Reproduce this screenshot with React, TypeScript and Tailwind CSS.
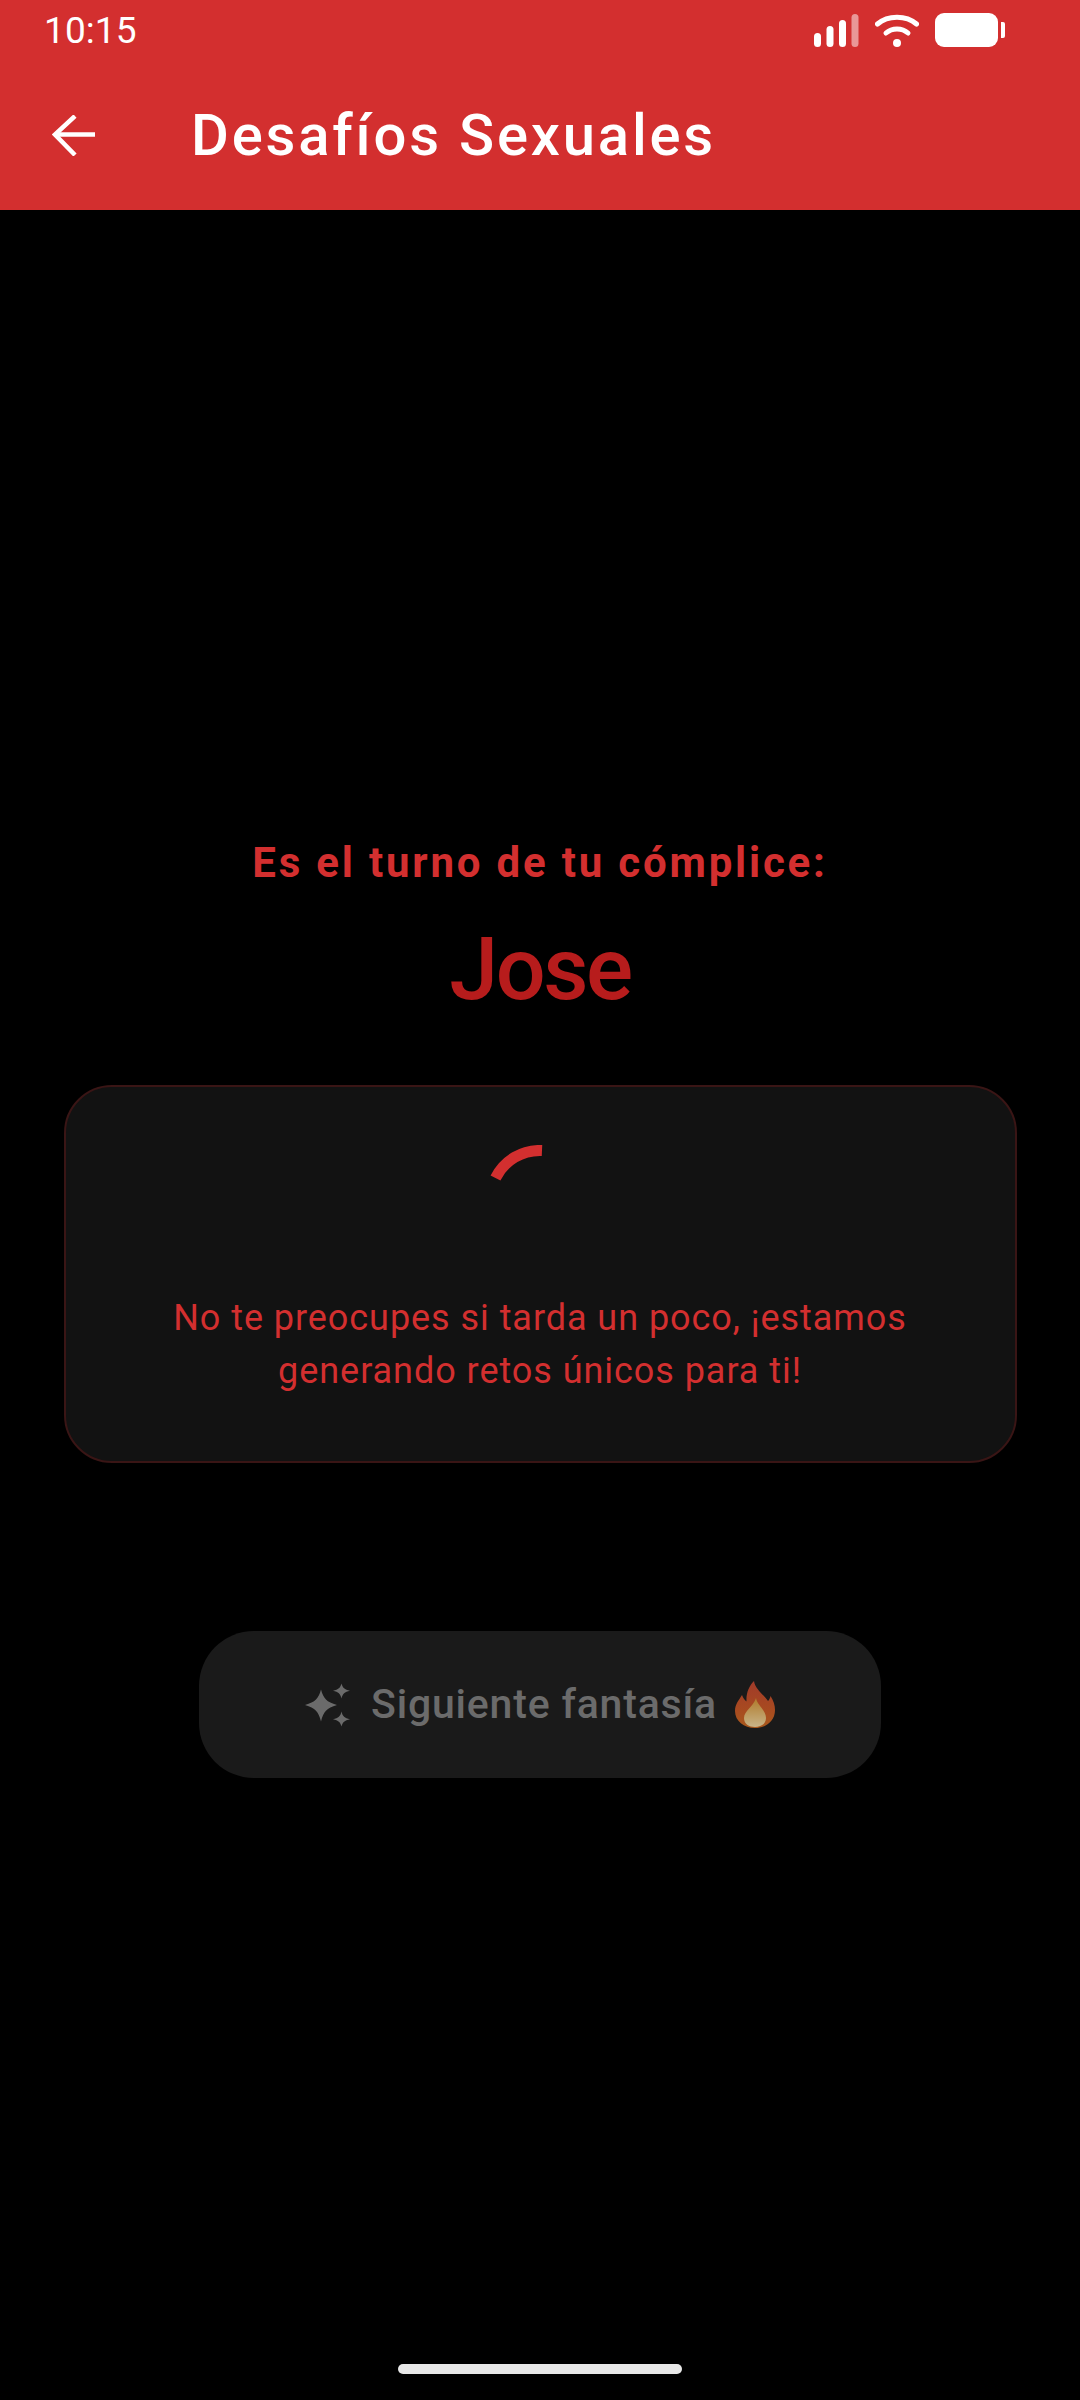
const RED = "#d32f2f";

function SignalIcon() {
  return (
    <svg width="45" height="33" viewBox="0 0 45 33" fill="#fff">
      <rect x="0" y="19" width="7" height="14" rx="3.5" />
      <rect x="12.5" y="12" width="7" height="21" rx="3.5" />
      <rect x="25" y="6" width="7" height="27" rx="3.5" />
      <rect x="37.5" y="0" width="7" height="33" rx="3.5" opacity="0.5" />
    </svg>
  );
}

function WifiIcon() {
  return (
    <svg width="44" height="33" viewBox="0 0 44 33" fill="none" stroke="#fff" strokeWidth="5" strokeLinecap="round">
      <path d="M2.5 10 C13 1 31 1 41.5 10" />
      <path d="M11 19 C17 13.5 27 13.5 33 19" />
      <circle cx="22" cy="29" r="4" fill="#fff" stroke="none" />
    </svg>
  );
}

function BatteryIcon() {
  return (
    <div className="flex items-center gap-[3px]">
      <div className="h-[34px] w-[63px] rounded-[9px] bg-white" />
      <div className="h-[16px] w-[4px] rounded-r-[2px] bg-white" />
    </div>
  );
}

function Spinner() {
  return (
    <svg width="110" height="110" viewBox="0 0 110 110" fill="none" stroke={RED} strokeWidth="11">
      <path d="M57 5.5 A49.5 49.5 0 0 0 10.5 33" />
    </svg>
  );
}

function Sparkles() {
  return (
    <svg width="45" height="44" viewBox="0 0 45 43" fill="#6b6b6b">
      <path d="M16 6 C18.500 15 21.500 18.500 32 21.500 C21.500 24.500 18.500 28 16 38 C13.500 28 10.500 24.500 0 21.500 C10.500 18.500 13.500 15 16 6 Z" />
      <path d="M36.500 0 C37.700 4.500 39.500 6 45 7.200 C39.500 8.500 37.700 10 36.500 15 C35.300 10 33.500 8.500 28 7.200 C33.500 6 35.300 4.500 36.500 0 Z" />
      <path d="M36.500 28 C37.700 33 39.500 34.500 45 35.700 C39.500 37 37.700 38.500 36.500 43 C35.300 38.500 33.500 37 28 35.700 C33.500 34.500 35.300 33 36.500 28 Z" />
    </svg>
  );
}

function Flame() {
  return (
    <svg width="40" height="47" viewBox="0 0 40 47">
      <defs>
        <linearGradient id="flameOuter" x1="0" y1="0" x2="0" y2="1">
          <stop offset="0" stopColor="#a03a2a" />
          <stop offset="0.6" stopColor="#a84a20" />
          <stop offset="1" stopColor="#a8591c" />
        </linearGradient>
        <linearGradient id="flameInner" x1="0" y1="0" x2="0" y2="1">
          <stop offset="0" stopColor="#b07a2a" />
          <stop offset="1" stopColor="#c8b488" />
        </linearGradient>
      </defs>
      <path
        d="M19 0 C20 8 29 14 33 20 C34 19 35 17.500 35.500 15 C38.500 20 40 24 40 29 C40 40 31 47 20 47 C9 47 0 40 0 30 C0 23 4 19 7 14 C8 17 9.500 19 11.500 20.500 C11 12 14 5 19 0 Z"
        fill="url(#flameOuter)"
      />
      <path
        d="M21 17 C22 24 31 29 31 37 C31 43 26 46 20 46 C14 46 9 43 9 37 C9 30 18 26 21 17 Z"
        fill="url(#flameInner)"
      />
    </svg>
  );
}

export default function App() {
  return (
    <div className="flex min-h-[2400px] flex-col bg-black font-['Roboto',sans-serif]">
      {/* App bar */}
      <header className="h-[210px] bg-[#d32f2f] text-white">
        <div className="flex h-[60px] items-center justify-between pl-[44px] pr-[75px]">
          <span className="text-[37px] leading-none tracking-[0.1px]">10:15</span>
          <div className="flex items-center gap-[16px]">
            <SignalIcon />
            <WifiIcon />
            <BatteryIcon />
          </div>
        </div>
        <div className="flex h-[150px] items-center pl-[52px]">
          <svg width="43" height="41" viewBox="0 0 43 41" fill="none" stroke="#fff" strokeWidth="4.5">
            <path d="M43 19.500 H3" />
            <path d="M23 1 L3 19.500 L23 40" />
          </svg>
          <h1 className="ml-[96px] text-[58px] font-medium leading-none tracking-[2.8px]">Desafíos Sexuales</h1>
        </div>
      </header>

      {/* Turn */}
      <main className="flex flex-1 flex-col items-center">
        <p className="mt-[628px] text-[42px] font-bold leading-[50px] tracking-[2.8px] text-[#d32f2f]">
          Es el turno de tu cómplice:
        </p>
        <p className="mt-[29px] text-[88px] font-medium leading-[104px] tracking-[-2.5px] text-[#b71c1c]">Jose</p>

        <section className="mt-[64px] flex h-[378px] w-[953px] flex-col items-center rounded-[48px] border-[2.5px] border-[#3a1515] bg-[#121212] pt-[58px]">
          <Spinner />
          <p className="mt-[37px] text-center text-[36px] leading-[53px] tracking-[0.95px] text-[#d32f2f]">
            No te preocupes si tarda un poco, ¡estamos
            <br />
            generando retos únicos para ti!
          </p>
        </section>

        <button
          type="button"
          className="mt-[168px] flex h-[147px] w-[682px] items-center justify-center rounded-[55px] bg-[#1a1a1a] text-[41px] font-medium text-[#6b6b6b]"
        >
          <Sparkles />
          <span className="ml-[21px] tracking-[0.8px]">Siguiente fantasía</span>
          <span className="ml-[18px]">
            <Flame />
          </span>
        </button>
      </main>

      {/* Gesture bar */}
      <div className="flex h-[36px] justify-center">
        <div className="h-[10px] w-[284px] rounded-full bg-[#e8e8e8]" />
      </div>
    </div>
  );
}
